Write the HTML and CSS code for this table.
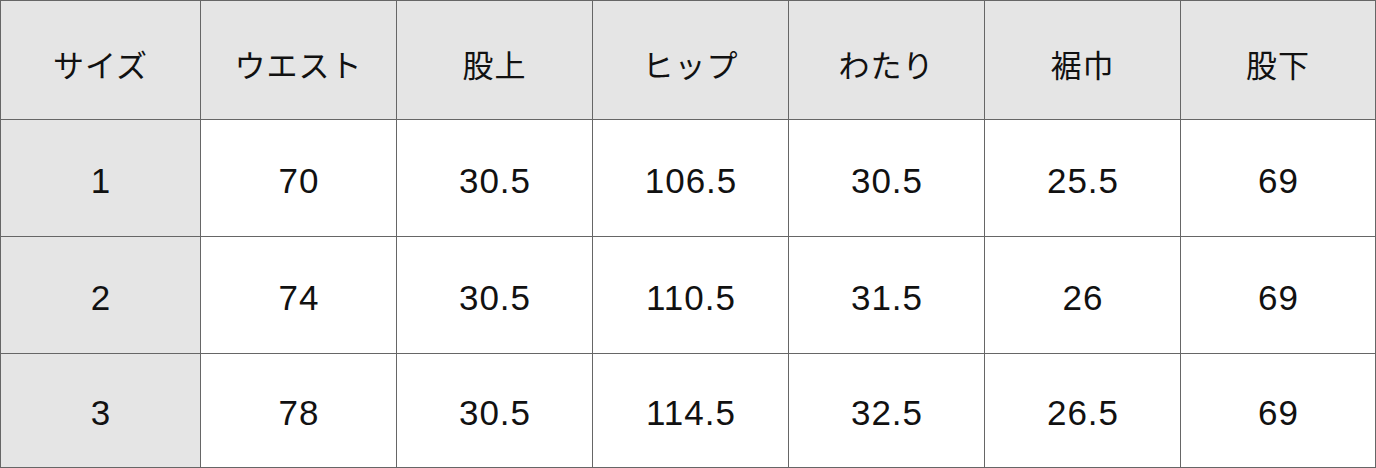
FILE: index.html
```html
<!DOCTYPE html>
<html lang="ja">
<head>
<meta charset="utf-8">
<link rel="stylesheet" href="styles.css">
</head>
<body>
<div class="size-table">
  <div class="cell head">サイズ</div>
  <div class="cell head">ウエスト</div>
  <div class="cell head">股上</div>
  <div class="cell head">ヒップ</div>
  <div class="cell head">わたり</div>
  <div class="cell head">裾巾</div>
  <div class="cell head">股下</div>

  <div class="cell head num">1</div>
  <div class="cell num">70</div>
  <div class="cell num">30.5</div>
  <div class="cell num">106.5</div>
  <div class="cell num">30.5</div>
  <div class="cell num">25.5</div>
  <div class="cell num">69</div>

  <div class="cell head num">2</div>
  <div class="cell num">74</div>
  <div class="cell num">30.5</div>
  <div class="cell num">110.5</div>
  <div class="cell num">31.5</div>
  <div class="cell num">26</div>
  <div class="cell num">69</div>

  <div class="cell head num">3</div>
  <div class="cell num">78</div>
  <div class="cell num">30.5</div>
  <div class="cell num">114.5</div>
  <div class="cell num">32.5</div>
  <div class="cell num">26.5</div>
  <div class="cell num">69</div>
</div>
</body>
</html>
```
FILE: styles.css
```css
html, body {
  margin: 0;
  padding: 0;
  background: #fff;
}
.size-table {
  display: grid;
  grid-template-columns: 200px repeat(5, 196px) 195px;
  grid-template-rows: 119px 117px 117px 114px;
  width: 1375px;
  border-right: 1px solid #666;
  border-bottom: 1px solid #666;
  font-family: "Liberation Sans", "Noto Sans CJK JP", sans-serif;
  color: #111;
}
.cell {
  box-sizing: border-box;
  border-left: 1px solid #666;
  border-top: 1px solid #666;
  display: flex;
  align-items: center;
  justify-content: center;
  font-size: 31px;
  padding-top: 6px;
  letter-spacing: 1px;
}
.head {
  background: #e5e5e5;
}
.num {
  font-size: 35px;
  letter-spacing: 1px;
  padding-left: 1px;
  padding-top: 5px;
}
```
